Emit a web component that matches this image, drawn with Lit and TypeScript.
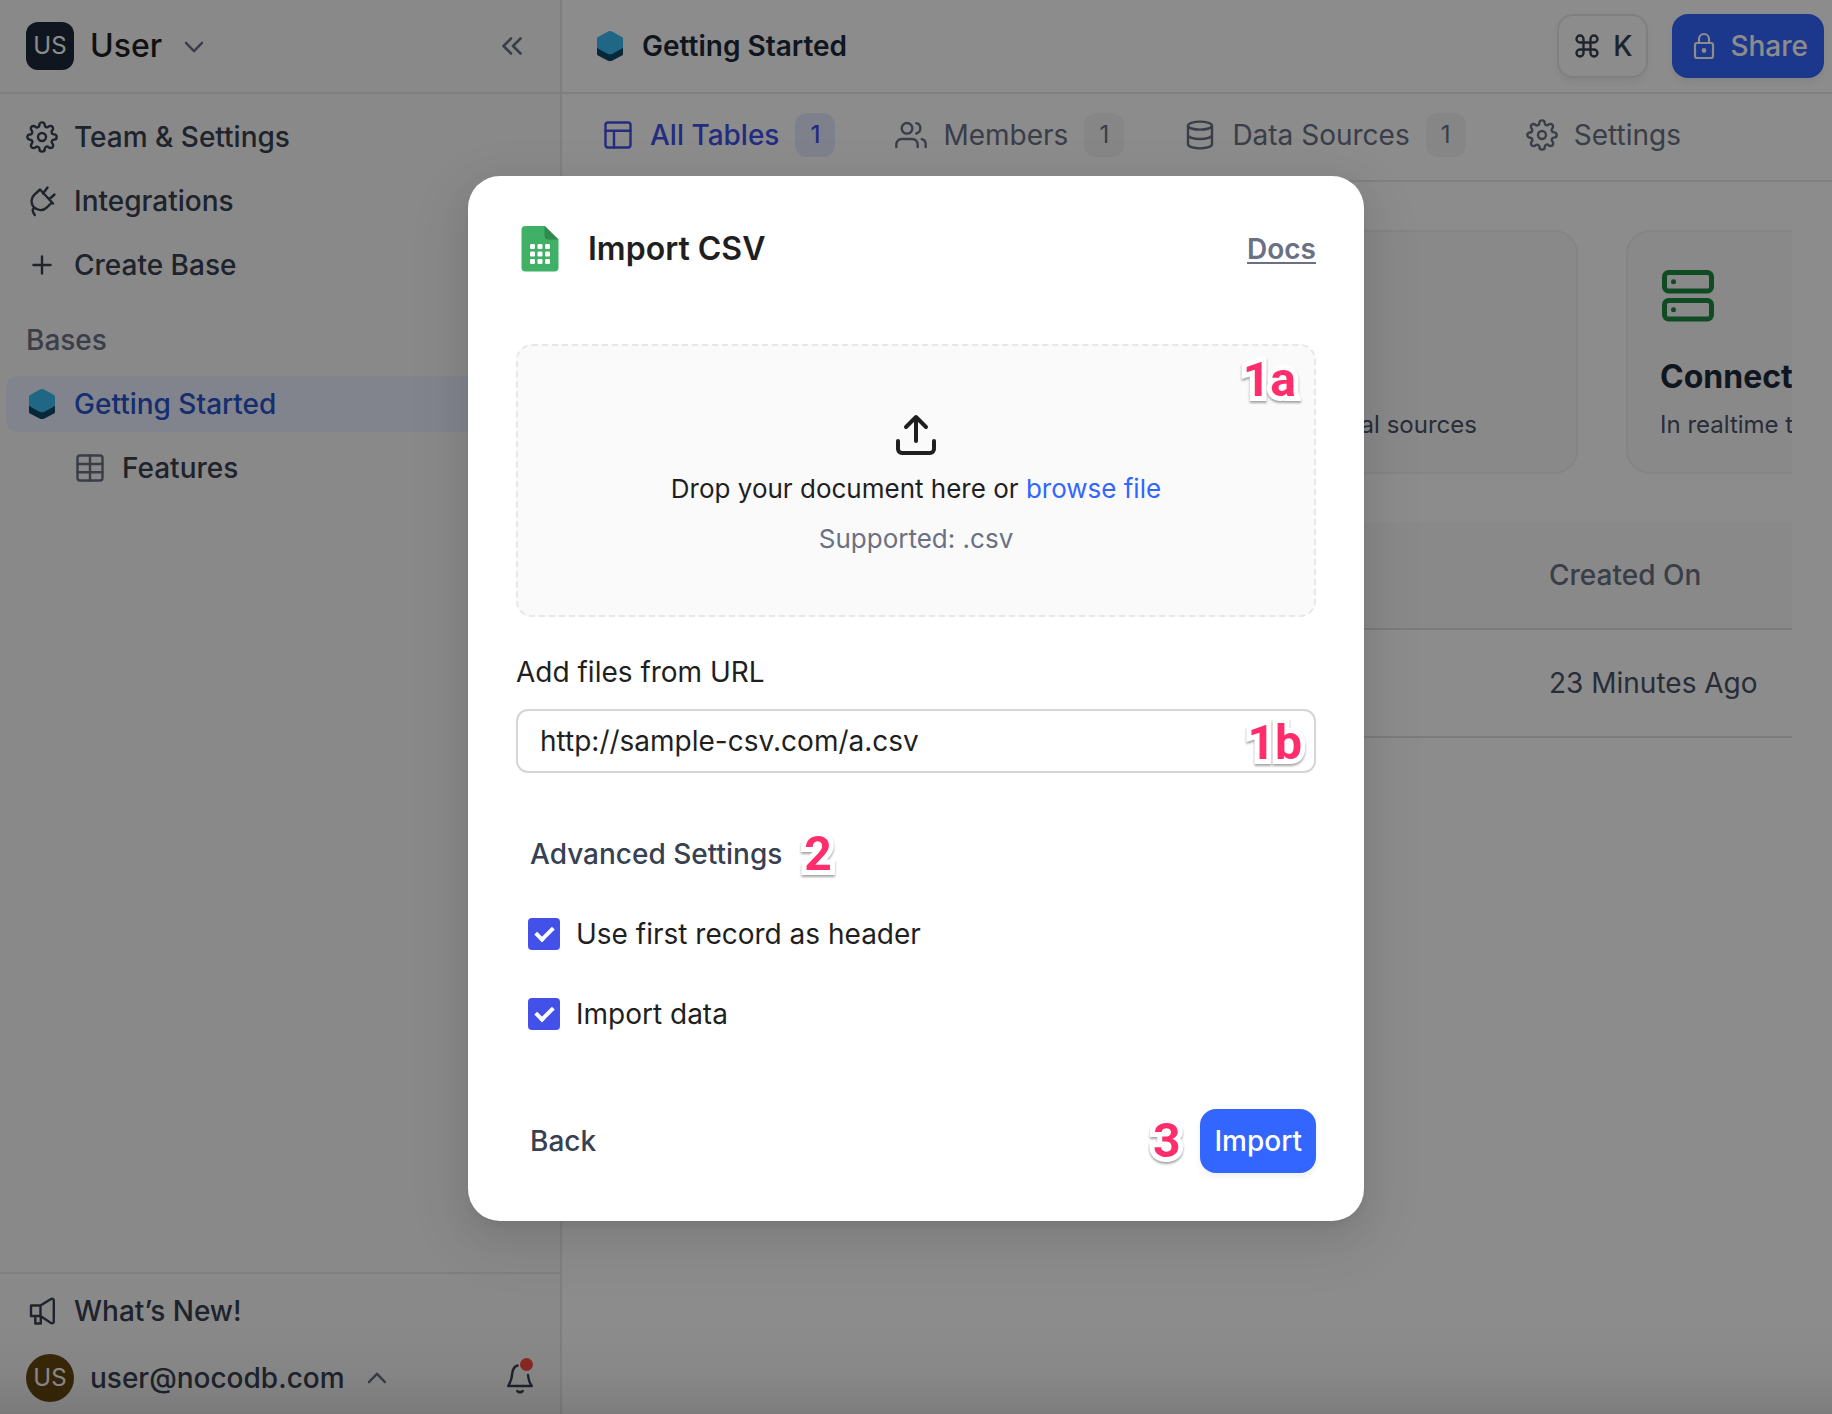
import { LitElement, html, css, svg, nothing } from "lit";
import { customElement, property } from "lit/decorators.js";

type IconName =
  | "gear" | "plug" | "plus" | "grid" | "horn" | "bell" | "down" | "up" | "collapse"
  | "layout" | "users" | "database" | "command" | "lock" | "server" | "upload" | "cube" | "sheet";

const ICONS: Record<IconName, { box: number; width: number; body: unknown }> = {
  gear: {
    box: 24, width: 1.8,
    body: svg`<circle cx="12" cy="12" r="3"/><path d="M19.4 15a1.65 1.65 0 0 0 .33 1.82l.06.06a2 2 0 0 1 0 2.83 2 2 0 0 1-2.83 0l-.06-.06a1.65 1.65 0 0 0-1.82-.33 1.65 1.65 0 0 0-1 1.51V21a2 2 0 0 1-2 2 2 2 0 0 1-2-2v-.09A1.65 1.65 0 0 0 9 19.4a1.65 1.65 0 0 0-1.82.33l-.06.06a2 2 0 0 1-2.83 0 2 2 0 0 1 0-2.83l.06-.06a1.65 1.65 0 0 0 .33-1.82 1.65 1.65 0 0 0-1.51-1H3a2 2 0 0 1-2-2 2 2 0 0 1 2-2h.09A1.65 1.65 0 0 0 4.6 9a1.65 1.65 0 0 0-.33-1.82l-.06-.06a2 2 0 0 1 0-2.83 2 2 0 0 1 2.83 0l.06.06a1.65 1.65 0 0 0 1.82.33H9a1.65 1.65 0 0 0 1-1.51V3a2 2 0 0 1 2-2 2 2 0 0 1 2 2v.09a1.65 1.65 0 0 0 1 1.51 1.65 1.65 0 0 0 1.82-.33l.06-.06a2 2 0 0 1 2.83 0 2 2 0 0 1 0 2.83l-.06.06a1.65 1.65 0 0 0-.33 1.82V9a1.65 1.65 0 0 0 1.51 1H21a2 2 0 0 1 2 2 2 2 0 0 1-2 2h-.09a1.65 1.65 0 0 0-1.51 1z"/>`,
  },
  plug: {
    box: 32, width: 2.4,
    body: svg`<path d="M14 4.500L27 18.500M13.500 5L8.200 9.800C4.600 13.400 4.800 18.600 7.800 22.200C11.600 25.800 17 26.200 20.600 22.600L26 17.500M17 8.500L21.500 2.500M23 14.500L28.500 9.500M8.500 22.500C6 24.500 6.300 27 8.800 30"/>`,
  },
  plus: { box: 32, width: 2.4, body: svg`<path d="M16 7.500v17M7.500 16h17"/>` },
  grid: {
    box: 32, width: 2.4,
    body: svg`<rect x="3.500" y="3.500" width="25" height="25" rx="2.500"/><path d="M16 3.500v25M3.500 12h25M3.500 20.300h25"/>`,
  },
  horn: {
    box: 32, width: 2.4,
    body: svg`<path d="M5 10.500h9.500v10.500H5zM14.500 10.500L24.600 4.200c1.600-1 3.200-.3 3.200 1.300v21c0 1.600-1.600 2.200-3.200 1.200L14.500 21M9.300 21v7.500h5.500V21"/>`,
  },
  bell: {
    box: 32, width: 2.4,
    body: svg`<path d="M13.500 3.500C9.700 4.600 8.800 7.500 8.300 11C8 15.500 7.300 19 4.200 24H27.800C25.500 21 24.400 17 24 13M13.300 29q2.700 2.500 5.400 0"/>`,
  },
  down: { box: 32, width: 2.4, body: svg`<path d="M8 12.800l8 8.400 8-8.400"/>` },
  up: { box: 32, width: 2.4, body: svg`<path d="M8 20.200l8-8.400 8 8.400"/>` },
  collapse: { box: 32, width: 2.6, body: svg`<path d="M15 8.500L7.500 16l7.500 7.500M24.500 8.500L17 16l7.500 7.500"/>` },
  layout: {
    box: 32, width: 2.4,
    body: svg`<rect x="3.500" y="3.500" width="25" height="25" rx="2.500"/><path d="M3.500 11.800h25M12 11.800v16.700"/>`,
  },
  users: {
    box: 24, width: 1.8,
    body: svg`<path d="M17 21v-2a4 4 0 0 0-4-4H5a4 4 0 0 0-4 4v2"/><circle cx="9" cy="7" r="4"/><path d="M23 21v-2a4 4 0 0 0-3-3.870M16 3.130a4 4 0 0 1 0 7.750"/>`,
  },
  database: {
    box: 24, width: 1.8,
    body: svg`<ellipse cx="12" cy="5" rx="9" ry="3"/><path d="M21 12c0 1.660-4 3-9 3s-9-1.340-9-3M3 5v14c0 1.660 4 3 9 3s9-1.340 9-3V5"/>`,
  },
  command: {
    box: 24, width: 2,
    body: svg`<path d="M18 3a3 3 0 0 0-3 3v12a3 3 0 1 0 3-3H6a3 3 0 1 0 3 3V6a3 3 0 1 0-3 3h12a3 3 0 0 0 0-6z"/>`,
  },
  lock: {
    box: 32, width: 2.2,
    body: svg`<rect x="7" y="13" width="18" height="15" rx="2"/><path d="M11 13V9a5 5 0 0 1 10 0v4"/><circle cx="16" cy="20.500" r="1.300" fill="currentColor"/>`,
  },
  server: {
    box: 56, width: 5,
    body: svg`<rect x="4.500" y="4.500" width="47" height="18.500" rx="4"/><rect x="4.500" y="32.500" width="47" height="18.500" rx="4"/><circle cx="13.500" cy="13.700" r="2.500" fill="currentColor" stroke="none"/><circle cx="13.500" cy="41.700" r="2.500" fill="currentColor" stroke="none"/>`,
  },
  upload: {
    box: 48, width: 4,
    body: svg`<path d="M6 30v8a4 4 0 0 0 4 4h28a4 4 0 0 0 4-4v-8M24 30V6M14 16L24 6l10 10"/>`,
  },
  cube: {
    box: 32, width: 0,
    body: svg`<path stroke="none" fill="#0b4a68" d="M3 14h26v10q0 1-1 1.500l-9.500 5q-2.500 1.200-5 0L4 25.500q-1-.5-1-1.500z"/><path stroke="none" fill="#3bbcf3" d="M3 8.500q0-1 1-1.500L13.500 1.700q2.500-1.200 5 0L28 7q1 .5 1 1.500V17q0 1-1 1.500l-9.500 5.200q-2.500 1.200-5 0L4 18.500q-1-.5-1-1.500z"/>`,
  },
  sheet: {
    box: 48, width: 0,
    body: svg`<path stroke="none" fill="#40b067" d="M9.500 1H29L42.500 14.500V42.500a4 4 0 0 1-4 4H9.500a4 4 0 0 1-4-4V5a4 4 0 0 1 4-4z"/><path stroke="none" fill="#2f8a4f" d="M28.500 1v9.500a4 4 0 0 0 4 4h10z"/><g fill="#fff" stroke="none">${[14, 21.5, 29].map(
      (x) => [19, 26.5, 34].map((y) => svg`<rect x=${x} y=${y} width="5" height="5" rx="1.200"/>`),
    )}</g>`,
  },
};

@customElement("nc-icon")
export class NcIcon extends LitElement {
  @property() name: IconName = "plus";
  static styles = css`
    :host { display: inline-flex; flex: none; width: 32px; height: 32px; }
    svg { width: 100%; height: 100%; overflow: visible; }
  `;
  render() {
    const icon = ICONS[this.name];
    return html`<svg viewBox="0 0 ${icon.box} ${icon.box}" fill="none" stroke="currentColor"
      stroke-width=${icon.width} stroke-linecap="round" stroke-linejoin="round" aria-hidden="true">${icon.body}</svg>`;
  }
}

const base = css`
  :host, * { box-sizing: border-box; }
  button, input, a, h1, h2, p {
    font: inherit; color: inherit; margin: 0; padding: 0; border: 0; background: none; text-decoration: none;
  }
  button { cursor: pointer; }
`;

@customElement("nc-sidebar")
export class NcSidebar extends LitElement {
  static styles = [base, css`
    :host {
      display: flex; flex-direction: column; background: #f9f9fa; color: #374151;
      border-right: 2px solid #e7e7e9; font-weight: 500;
    }
    .head { display: flex; align-items: center; height: 94px; padding: 0 32px 0 26px; border-bottom: 2px solid #e7e7e9; }
    .who { display: flex; align-items: center; gap: 16px; }
    .workspace { color: #1f1f1f; font-size: 32px; }
    .muted { color: #6a7184; }
    .push { display: flex; margin-left: auto; }
    .avatar {
      display: flex; align-items: center; justify-content: center; width: 48px; height: 48px;
      border-radius: 12px; background: #1d2939; color: #fff; font-size: 24px; font-weight: 400;
    }
    .round { border-radius: 50%; background: #664710; }
    nav { display: flex; flex-direction: column; gap: 8px; padding: 15px 0 0 6px; }
    .row {
      display: flex; align-items: center; gap: 16px; height: 56px; padding-left: 20px;
      border-radius: 12px 0 0 12px; text-align: left;
    }
    .active { background: #ebf0ff; color: #2952cc; }
    .child { padding-left: 68px; }
    .section { padding: 19px 0 8px 20px; color: #6a7184; }
    footer { margin-top: auto; border-top: 2px solid #e7e7e9; padding: 9px 24px 12px 6px; }
    .account { display: flex; align-items: center; height: 48px; margin-top: 15px; padding-left: 20px; }
    .alerts { position: relative; }
    .dot { position: absolute; top: -4px; right: 3px; width: 13px; height: 13px; border-radius: 50%; background: #ff4a3f; }
  `];
  render() {
    return html`
      <header class="head">
        <button class="who"><span class="avatar">US</span><span class="workspace">User</span><nc-icon class="muted" name="down"></nc-icon></button>
        <button class="push muted" aria-label="Collapse sidebar"><nc-icon name="collapse"></nc-icon></button>
      </header>
      <nav>
        <a class="row" href="#team"><nc-icon name="gear"></nc-icon>Team &amp; Settings</a>
        <a class="row" href="#integrations"><nc-icon name="plug"></nc-icon>Integrations</a>
        <button class="row"><nc-icon name="plus"></nc-icon>Create Base</button>
        <h2 class="section">Bases</h2>
        <a class="row active" href="#base"><nc-icon name="cube"></nc-icon>Getting Started</a>
        <a class="row child" href="#features"><nc-icon class="muted" name="grid"></nc-icon>Features</a>
      </nav>
      <footer>
        <a class="row" href="#news"><nc-icon name="horn"></nc-icon>What’s New!</a>
        <div class="account">
          <button class="who"><span class="avatar round">US</span><span>user@nocodb.com</span><nc-icon class="muted" name="up"></nc-icon></button>
          <button class="push alerts" aria-label="Notifications"><nc-icon name="bell"></nc-icon><span class="dot"></span></button>
        </div>
      </footer>`;
  }
}

const TABS: { icon: IconName; label: string; count?: number }[] = [
  { icon: "layout", label: "All Tables", count: 1 },
  { icon: "users", label: "Members", count: 1 },
  { icon: "database", label: "Data Sources", count: 1 },
  { icon: "gear", label: "Settings" },
];

@customElement("nc-workspace")
export class NcWorkspace extends LitElement {
  static styles = [base, css`
    :host { display: block; min-width: 0; background: #fff; }
    .top { display: flex; align-items: center; height: 94px; padding: 0 8px 0 32px; border-bottom: 2px solid #e7e7e9; }
    .name { display: flex; align-items: center; gap: 16px; margin-right: auto; color: #1d2939; font-weight: 600; }
    .actions { display: flex; gap: 24px; font-weight: 500; }
    .btn {
      display: flex; align-items: center; justify-content: center; gap: 12px; height: 64px; padding: 0 14px;
      border: 2px solid #e7e7e9; border-radius: 16px; color: #374151; box-shadow: 0 4px 6px rgba(0, 0, 0, 0.06);
    }
    .share { gap: 10px; border-color: #3366ff; background: #3366ff; color: #fff; }
    .cmd { width: 28px; height: 28px; }
    .tabs { display: flex; align-items: center; gap: 60px; height: 88px; padding: 0 40px 4px; border-bottom: 2px solid #e7e7e9; color: #6a7184; }
    .tab { display: flex; align-items: center; gap: 16px; }
    .on { color: #4351e8; font-weight: 500; }
    .count { width: 40px; border-radius: 12px; background: #f4f4f5; font-size: 24px; line-height: 44px; text-align: center; }
    .on .count { background: #e6ebff; }
    .body { padding: 48px 40px 0; }
    .cards { display: flex; gap: 48px; overflow: hidden; }
    .card {
      display: flex; flex: none; flex-direction: column; width: 464px; height: 244px; padding: 36px 32px 0;
      border: 2px solid #f0f0f1; border-radius: 24px; background: #f9f9fa; text-align: left; white-space: nowrap;
    }
    .art { width: 56px; height: 56px; color: #1d8a41; }
    .card h2 { margin-top: 31px; color: #1d2939; font-size: 32px; font-weight: 700; line-height: 44px; }
    .card p { margin-top: 10px; color: #4a5268; font-size: 24px; line-height: 32px; }
    table { width: 100%; margin-top: 48px; border-collapse: separate; border-spacing: 0; text-align: left; table-layout: fixed; }
    th, td { height: 108px; padding: 0; border-bottom: 2px solid #e1e1e3; }
    th { background: #f9f9fa; color: #6a7184; font-weight: 500; }
    td { color: #4a5268; }
    .when { width: 243px; }
  `];
  render() {
    return html`
      <header class="top">
        <h1 class="name"><nc-icon name="cube"></nc-icon>Getting Started</h1>
        <div class="actions">
          <button class="btn"><nc-icon class="cmd" name="command"></nc-icon>K</button>
          <button class="btn share"><nc-icon name="lock"></nc-icon>Share</button>
        </div>
      </header>
      <nav class="tabs">
        ${TABS.map((tab, i) => html`
          <button class=${i === 0 ? "tab on" : "tab"}>
            <nc-icon name=${tab.icon}></nc-icon>${tab.label}
            ${tab.count ? html`<span class="count">${tab.count}</span>` : nothing}
          </button>`)}
      </nav>
      <div class="body">
        <div class="cards">
          <div class="card"></div>
          <button class="card"><nc-icon class="art"></nc-icon><h2>Import</h2><p>From files &amp; external sources</p></button>
          <button class="card"><nc-icon class="art" name="server"></nc-icon><h2>Connect</h2><p>In realtime to</p></button>
        </div>
        <table>
          <thead><tr><th></th><th class="when">Created On</th></tr></thead>
          <tbody><tr><td></td><td>23 Minutes Ago</td></tr></tbody>
        </table>
      </div>`;
  }
}

@customElement("nc-import-dialog")
export class NcImportDialog extends LitElement {
  static styles = [base, css`
    :host {
      display: flex; flex-direction: column; width: 896px; max-width: 100%; padding: 48px; border-radius: 32px;
      background: #fff; color: #1f1f1f;
      box-shadow: 0 12px 32px rgba(0, 0, 0, 0.08), 0 6px 12px -8px rgba(0, 0, 0, 0.12), 0 18px 56px 16px rgba(0, 0, 0, 0.05);
    }
    header { display: flex; align-items: center; gap: 24px; height: 50px; }
    .logo { width: 48px; height: 48px; }
    h2 { font-size: 32px; font-weight: 600; }
    .docs { margin-left: auto; color: #6a7184; font-weight: 600; text-decoration: underline; text-decoration-thickness: 2px; text-underline-offset: 3px; }
    .drop {
      position: relative; display: flex; flex-direction: column; align-items: center; gap: 10px; margin-top: 70px;
      padding: 65px 0 56px; border: 2px dashed #e7e7e9; border-radius: 16px; background: #fafafa;
      font-size: 26px; line-height: 40px;
    }
    .up { width: 48px; height: 48px; }
    .browse { color: #3366ff; }
    .hint { color: #6a7184; }
    .label { margin-top: 35px; line-height: 40px; }
    .url { position: relative; margin-top: 17px; }
    .url input { display: block; width: 100%; height: 64px; padding: 0 22px; border: 2px solid #d5d5d9; border-radius: 12px; outline: none; }
    .mark {
      color: #ff2d6c; font: 700 48px/56px Roboto, "Liberation Sans", sans-serif; -webkit-text-stroke: 10px #fff;
      stroke-linejoin: round; paint-order: stroke fill; filter: drop-shadow(0 2px 1px rgba(0, 0, 0, 0.35));
    }
    .over { position: absolute; top: 6px; right: 14px; }
    .drop .over { right: 18px; }
    .adv { display: flex; align-items: center; gap: 22px; height: 58px; margin-top: 52px; padding-left: 14px; }
    .adv button, .back { color: #374151; font-weight: 500; }
    .checks { display: flex; flex-direction: column; align-items: flex-start; gap: 48px; margin-top: 35px; padding-left: 12px; }
    .check { display: flex; align-items: center; gap: 16px; height: 32px; }
    .check input { appearance: none; display: grid; width: 32px; height: 32px; border-radius: 4px; background: #4351e8; }
    .check input:not(:checked) { background: #fff; border: 2px solid #d5d5d9; }
    .check input:checked::after {
      content: ""; box-sizing: border-box; justify-self: center; width: 11px; height: 18px; margin-top: 5px;
      border: solid #fff; border-width: 0 4px 4px 0; transform: rotate(45deg);
    }
    footer { display: flex; align-items: center; gap: 20px; height: 64px; margin-top: 79px; padding-left: 14px; }
    .back { margin-right: auto; }
    .go { height: 64px; padding: 0 14px; border-radius: 16px; background: #3366ff; color: #fff; font-weight: 500; box-shadow: 0 4px 6px rgba(0, 0, 0, 0.06); }
  `];
  render() {
    return html`
      <header><nc-icon class="logo" name="sheet"></nc-icon><h2>Import CSV</h2><a class="docs" href="#docs">Docs</a></header>
      <div class="drop">
        <nc-icon class="up" name="upload"></nc-icon>
        <p>Drop your document here or <a class="browse" href="#browse">browse file</a></p>
        <p class="hint">Supported: .csv</p>
        <span class="mark over">1a</span>
      </div>
      <label class="label" for="url">Add files from URL</label>
      <div class="url"><input id="url" type="text" value="http://sample-csv.com/a.csv" /><span class="mark over">1b</span></div>
      <div class="adv"><button>Advanced Settings</button><span class="mark">2</span></div>
      <div class="checks">
        <label class="check"><input type="checkbox" checked />Use first record as header</label>
        <label class="check"><input type="checkbox" checked />Import data</label>
      </div>
      <footer><button class="back">Back</button><span class="mark">3</span><button class="go">Import</button></footer>`;
  }
}

@customElement("app-root")
export class AppRoot extends LitElement {
  static styles = css`
    :host {
      position: relative; display: grid; grid-template-columns: 562px minmax(0, 1fr); min-height: 100vh;
      font: 400 28px/40px Inter, "Liberation Sans", sans-serif; overflow: hidden;
    }
    .mask {
      position: absolute; inset: 0; display: flex; align-items: flex-start; justify-content: center; padding-top: 176px;
      background: linear-gradient(to top, rgba(0, 0, 0, 0.11), rgba(0, 0, 0, 0.03) 40px, transparent 90px), rgba(0, 0, 0, 0.45);
    }
  `;
  render() {
    return html`<nc-sidebar></nc-sidebar><nc-workspace></nc-workspace>
      <div class="mask"><nc-import-dialog role="dialog" aria-label="Import CSV"></nc-import-dialog></div>`;
  }
}
